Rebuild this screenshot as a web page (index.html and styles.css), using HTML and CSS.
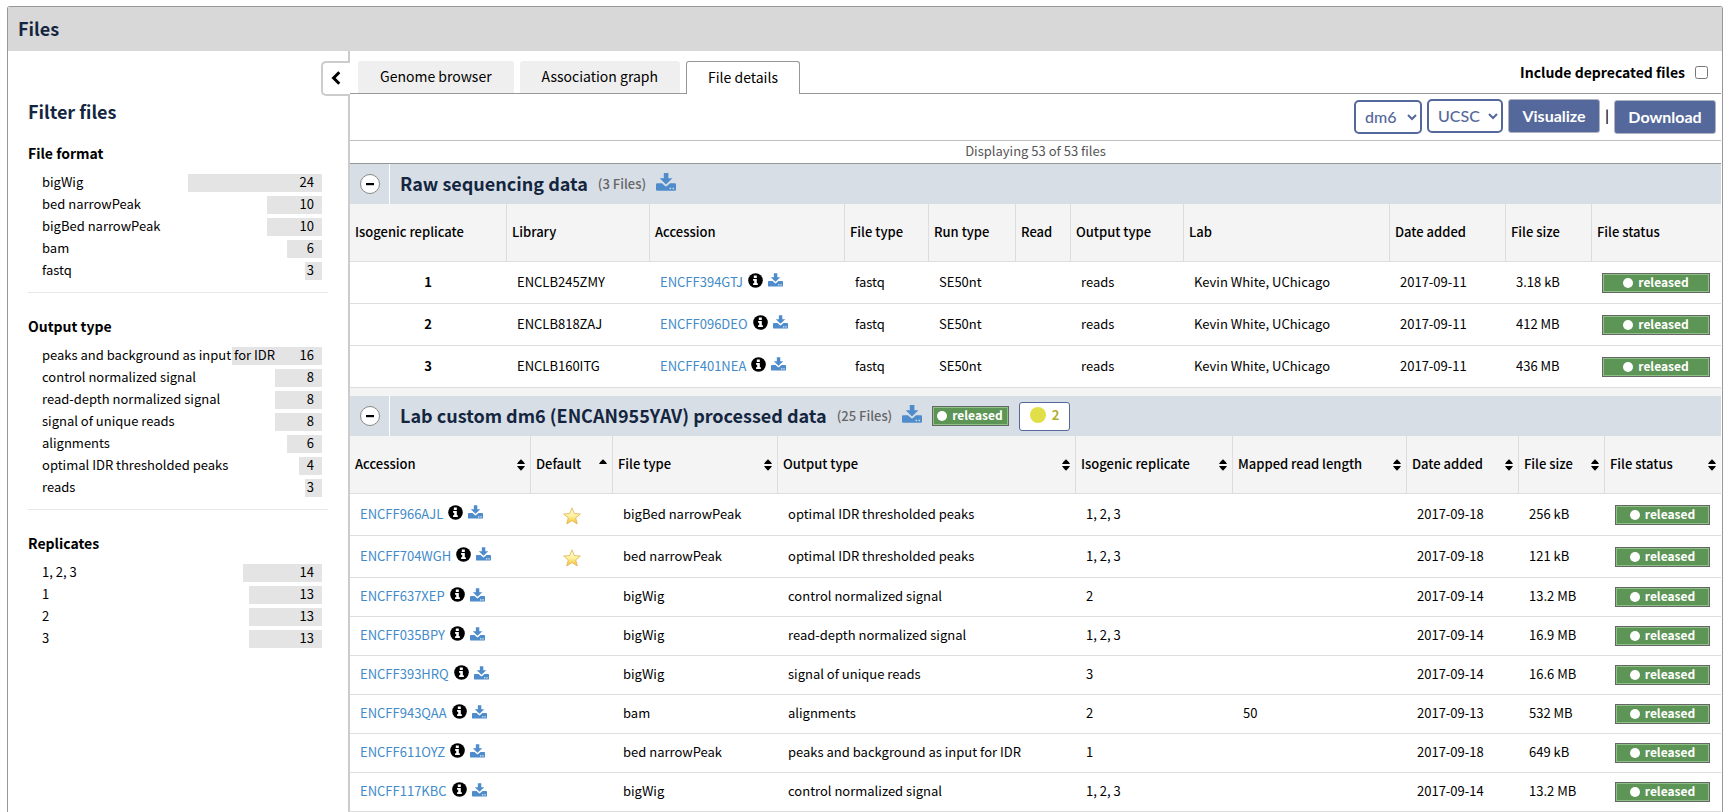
FILE: index.html
```html
<!DOCTYPE html>
<html lang="en">
<head>
<meta charset="utf-8">
<title>Files</title>
<link rel="stylesheet" href="styles.css">
</head>
<body>
<svg class="sprite" aria-hidden="true">
<defs>
<linearGradient id="gold" x1="0" y1="0" x2="0" y2="1"><stop offset="0" stop-color="#fffef2"/><stop offset="0.5" stop-color="#fdf3a0"/><stop offset="1" stop-color="#f3bf2a"/></linearGradient>
</defs>
<symbol id="i-info" viewBox="0 0 16 16"><circle cx="8" cy="8" r="7.8"/><path fill="#fff" d="M6.2 2.6h3.2v2.6H6.2zM5.4 6.3h4v4.6h1.1v1.9H5.4v-1.9h1.2V8.2H5.4z"/></symbol>
<symbol id="i-down" viewBox="0 0 20 18"><path d="M7.8 0h4.6v5.2h4L10 11.4 3.700 5.200h4.100z"/><path fill-rule="evenodd" d="M1.200 10.200h4.800l3 2.900q1 .9 2 0l3-2.900h4.800q1.200 0 1.200 1.200v5.200q0 1.200-1.200 1.200H1.200Q0 17.800 0 16.600v-5.200q0-1.200 1.200-1.200zM13.600 14.800v1.400h1.500v-1.400zm3 0v1.400h1.500v-1.400z"/></symbol>
<symbol id="i-star" viewBox="0 0 20 20"><path fill="url(#gold)" stroke="#e3b04b" stroke-width=".9" stroke-linejoin="round" d="M10 1l2.500 6.300 6.800.5-5.200 4.300 1.700 6.700L10 15.100l-5.800 3.700 1.700-6.700L.7 7.800l6.800-.5z"/></symbol>
<symbol id="i-sort" viewBox="0 0 8 12"><path d="M4 .3Q6.500 2.500 8 5H0Q1.500 2.500 4 .3zM4 11.700Q1.500 9.500 0 7h8Q6.500 9.500 4 11.700z"/></symbol>
<symbol id="i-up" viewBox="0 0 8 12"><path d="M4 .3Q6.500 2.500 8 5H0Q1.500 2.500 4 .3z"/></symbol>
<symbol id="i-minus" viewBox="0 0 20 20"><circle cx="10" cy="10" r="9.500" fill="#fff" stroke="#888"/><path d="M6 9h8v2.200H6z"/></symbol>
</svg>
<section class="panel">
<header class="panel-head"><h1>Files</h1></header>
<div class="panel-body">
<aside class="sidebar">
<div class="toggle-row"><button class="toggle" type="button" aria-label="Collapse filters"><svg viewBox="0 0 10 14"><path d="M8.300 1.300L2.600 7l5.700 5.700" fill="none" stroke="#000" stroke-width="3"/></svg></button></div>
<h2>Filter files</h2>
<section class="facet"><h3>File format</h3>
<ul>
<li><span>bigWig</span><b style="width:134px">24</b></li>
<li><span>bed narrowPeak</span><b style="width:55px">10</b></li>
<li><span>bigBed narrowPeak</span><b style="width:55px">10</b></li>
<li><span>bam</span><b style="width:35px">6</b></li>
<li><span>fastq</span><b style="width:17px">3</b></li>
</ul></section>
<section class="facet"><h3>Output type</h3>
<ul>
<li><span>peaks and background as input for IDR</span><b style="width:90px">16</b></li>
<li><span>control normalized signal</span><b style="width:47px">8</b></li>
<li><span>read-depth normalized signal</span><b style="width:47px">8</b></li>
<li><span>signal of unique reads</span><b style="width:47px">8</b></li>
<li><span>alignments</span><b style="width:35px">6</b></li>
<li><span>optimal IDR thresholded peaks</span><b style="width:23px">4</b></li>
<li><span>reads</span><b style="width:17px">3</b></li>
</ul></section>
<section class="facet"><h3>Replicates</h3>
<ul>
<li><span>1, 2, 3</span><b style="width:79px">14</b></li>
<li><span>1</span><b style="width:73px">13</b></li>
<li><span>2</span><b style="width:73px">13</b></li>
<li><span>3</span><b style="width:73px">13</b></li>
</ul></section>
</aside>
<main class="content">
<div class="tabs">
<button class="tab" type="button">Genome browser</button>
<button class="tab" type="button">Association graph</button>
<button class="tab active" type="button">File details</button>
<label class="deprecated">Include deprecated files <input type="checkbox"></label>
</div>
<div class="controls">
<span class="pick low"><select class="assembly" aria-label="Assembly"><option>dm6</option></select><svg viewBox="0 0 10 7"><path d="M1 1l4 4 4-4"/></svg></span>
<span class="pick"><select class="browser" aria-label="Browser"><option>UCSC</option></select><svg viewBox="0 0 10 7"><path d="M1 1l4 4 4-4"/></svg></span>
<button class="btn visualize" type="button">Visualize</button>
<span class="bar">|</span>
<button class="btn download low" type="button">Download</button>
</div>
<p class="summary">Displaying 53 of 53 files</p>

<div class="group">
<button class="fold" type="button" aria-label="Collapse"><svg><use href="#i-minus"/></svg></button>
<div class="group-title"><h2>Raw sequencing data</h2><span class="count">(3 Files)</span><a href="#" aria-label="Download all"><svg class="down-lg"><use href="#i-down"/></svg></a></div>
</div>
<table>
<colgroup><col style="width:157px"><col style="width:143px"><col style="width:195px"><col style="width:84px"><col style="width:87px"><col style="width:55px"><col style="width:113px"><col style="width:206px"><col style="width:116px"><col style="width:86px"><col style="width:129px"></colgroup>
<thead><tr><th>Isogenic replicate</th><th>Library</th><th>Accession</th><th>File type</th><th>Run type</th><th>Read</th><th>Output type</th><th>Lab</th><th>Date added</th><th>File size</th><th>File status</th></tr></thead>
<tbody>
<tr class="tall-row"><td class="rep">1</td><td>ENCLB245ZMY</td><td><div class="acc"><a href="#">ENCFF394GTJ</a><svg class="info"><use href="#i-info"/></svg><svg class="down"><use href="#i-down"/></svg></div></td><td>fastq</td><td>SE50nt</td><td></td><td>reads</td><td>Kevin White, UChicago</td><td>2017-09-11</td><td>3.18 kB</td><td><div class="status"><i></i>released</div></td></tr>
<tr class="tall-row"><td class="rep">2</td><td>ENCLB818ZAJ</td><td><div class="acc"><a href="#">ENCFF096DEO</a><svg class="info"><use href="#i-info"/></svg><svg class="down"><use href="#i-down"/></svg></div></td><td>fastq</td><td>SE50nt</td><td></td><td>reads</td><td>Kevin White, UChicago</td><td>2017-09-11</td><td>412 MB</td><td><div class="status"><i></i>released</div></td></tr>
<tr class="tall-row"><td class="rep">3</td><td>ENCLB160ITG</td><td><div class="acc"><a href="#">ENCFF401NEA</a><svg class="info"><use href="#i-info"/></svg><svg class="down"><use href="#i-down"/></svg></div></td><td>fastq</td><td>SE50nt</td><td></td><td>reads</td><td>Kevin White, UChicago</td><td>2017-09-11</td><td>436 MB</td><td><div class="status"><i></i>released</div></td></tr>
</tbody>
</table>
<div class="spacer"></div>
<div class="group">
<button class="fold" type="button" aria-label="Collapse"><svg><use href="#i-minus"/></svg></button>
<div class="group-title"><h2>Lab custom dm6 (ENCAN955YAV) processed data</h2><span class="count">(25 Files)</span><a href="#" aria-label="Download all"><svg class="down-lg"><use href="#i-down"/></svg></a><div class="status small"><i></i>released</div><button class="audit" type="button"><i></i>2</button></div>
</div>
<table>
<colgroup><col style="width:181px"><col style="width:82px"><col style="width:165px"><col style="width:298px"><col style="width:157px"><col style="width:174px"><col style="width:112px"><col style="width:86px"><col style="width:116px"></colgroup>
<thead><tr><th><div class="sort">Accession<svg><use href="#i-sort"/></svg></div></th><th><div class="sort">Default<svg><use href="#i-up"/></svg></div></th><th><div class="sort">File type<svg><use href="#i-sort"/></svg></div></th><th><div class="sort">Output type<svg><use href="#i-sort"/></svg></div></th><th><div class="sort">Isogenic replicate<svg><use href="#i-sort"/></svg></div></th><th><div class="sort">Mapped read length<svg><use href="#i-sort"/></svg></div></th><th><div class="sort">Date added<svg><use href="#i-sort"/></svg></div></th><th><div class="sort">File size<svg><use href="#i-sort"/></svg></div></th><th><div class="sort">File status<svg><use href="#i-sort"/></svg></div></th></tr></thead>
<tbody>
<tr class="tall-row"><td><div class="acc"><a href="#">ENCFF966AJL</a><svg class="info"><use href="#i-info"/></svg><svg class="down"><use href="#i-down"/></svg></div></td><td><svg class="star"><use href="#i-star"/></svg></td><td>bigBed narrowPeak</td><td>optimal IDR thresholded peaks</td><td>1, 2, 3</td><td></td><td>2017-09-18</td><td>256 kB</td><td><div class="status"><i></i>released</div></td></tr>
<tr class="tall-row"><td><div class="acc"><a href="#">ENCFF704WGH</a><svg class="info"><use href="#i-info"/></svg><svg class="down"><use href="#i-down"/></svg></div></td><td><svg class="star"><use href="#i-star"/></svg></td><td>bed narrowPeak</td><td>optimal IDR thresholded peaks</td><td>1, 2, 3</td><td></td><td>2017-09-18</td><td>121 kB</td><td><div class="status"><i></i>released</div></td></tr>
<tr><td><div class="acc"><a href="#">ENCFF637XEP</a><svg class="info"><use href="#i-info"/></svg><svg class="down"><use href="#i-down"/></svg></div></td><td></td><td>bigWig</td><td>control normalized signal</td><td>2</td><td></td><td>2017-09-14</td><td>13.2 MB</td><td><div class="status"><i></i>released</div></td></tr>
<tr><td><div class="acc"><a href="#">ENCFF035BPY</a><svg class="info"><use href="#i-info"/></svg><svg class="down"><use href="#i-down"/></svg></div></td><td></td><td>bigWig</td><td>read-depth normalized signal</td><td>1, 2, 3</td><td></td><td>2017-09-14</td><td>16.9 MB</td><td><div class="status"><i></i>released</div></td></tr>
<tr><td><div class="acc"><a href="#">ENCFF393HRQ</a><svg class="info"><use href="#i-info"/></svg><svg class="down"><use href="#i-down"/></svg></div></td><td></td><td>bigWig</td><td>signal of unique reads</td><td>3</td><td></td><td>2017-09-14</td><td>16.6 MB</td><td><div class="status"><i></i>released</div></td></tr>
<tr><td><div class="acc"><a href="#">ENCFF943QAA</a><svg class="info"><use href="#i-info"/></svg><svg class="down"><use href="#i-down"/></svg></div></td><td></td><td>bam</td><td>alignments</td><td>2</td><td>50</td><td>2017-09-13</td><td>532 MB</td><td><div class="status"><i></i>released</div></td></tr>
<tr><td><div class="acc"><a href="#">ENCFF611OYZ</a><svg class="info"><use href="#i-info"/></svg><svg class="down"><use href="#i-down"/></svg></div></td><td></td><td>bed narrowPeak</td><td>peaks and background as input for IDR</td><td>1</td><td></td><td>2017-09-18</td><td>649 kB</td><td><div class="status"><i></i>released</div></td></tr>
<tr><td><div class="acc"><a href="#">ENCFF117KBC</a><svg class="info"><use href="#i-info"/></svg><svg class="down"><use href="#i-down"/></svg></div></td><td></td><td>bigWig</td><td>control normalized signal</td><td>1, 2, 3</td><td></td><td>2017-09-14</td><td>13.2 MB</td><td><div class="status"><i></i>released</div></td></tr>
</tbody>
</table>
</main>
</div>
</section>
</body>
</html>
```
FILE: styles.css
```css
* { box-sizing: border-box; }
body {
  margin: 0;
  padding: 6px 8px 0 7px;
  background: #fff;
  color: #000;
  font: 13px/18px "Noto Sans CJK SC", "Noto Sans", sans-serif;
}
button, select, input { font: inherit; margin: 0; }
h1, h2, h3, p, ul { margin: 0; padding: 0; }
ul { list-style: none; }
a { color: #428bca; text-decoration: none; }
.sprite { position: absolute; width: 0; height: 0; }

.panel {
  border: 1px solid #979797;
  border-bottom: 0;
  border-radius: 3px 3px 0 0;
}
.panel-head { background: #d8d8d8; padding: 9px 10px 11px; }
h1, h2 { color: #14263f; font-size: 18px; line-height: 24px; font-weight: 700; }
.panel-body { display: flex; }

.sidebar {
  flex: none;
  width: 342px;
  border-right: 2px solid #ccc;
  padding: 10px 0 0 20px;
}
.toggle-row { display: flex; justify-content: flex-end; margin-right: -2px; }
.toggle {
  width: 29px;
  height: 35px;
  border: 2px solid #ccc;
  border-right: 0;
  border-radius: 5px 0 0 5px;
  background: #fff;
  padding: 0 0 2px 8px;
  display: flex;
  align-items: center;
}
.toggle svg { width: 10px; height: 14px; }
.sidebar h2 { margin-top: 3px; }
.facet { width: 300px; border-bottom: 1px solid #e8e8e8; padding: 18px 6px 8px 0; }
.facet + .facet { padding-top: 21px; }
.facet:last-child { border-bottom: 0; }
.facet h3 { font-size: 14px; line-height: 24px; font-weight: 700; margin-bottom: 9px; }
.facet li {
  display: grid;
  grid-template-columns: 1fr;
  height: 18px;
  margin-bottom: 4px;
  padding-left: 14px;
  line-height: 16px;
}
.facet li > * { grid-area: 1 / 1; }
.facet span { z-index: 1; }
.facet b {
  justify-self: end;
  background: #e4e4e4;
  font-weight: 400;
  text-align: right;
  padding-right: 8px;
}

.content { flex: 1; min-width: 0; margin-right: 1px; }
.tabs {
  display: flex;
  align-items: flex-end;
  gap: 6px;
  height: 43px;
  padding-left: 8px;
  border-bottom: 1px solid #979797;
}
.tab {
  height: 32px;
  padding: 0 22px 2px;
  border: 0;
  border-radius: 3px 3px 0 0;
  background: #efefef;
  color: #000;
  font-size: 14px;
}
.tab.active {
  height: 33px;
  margin-bottom: -1px;
  padding: 0 21px 3px;
  border: 1px solid #979797;
  border-bottom: 0;
  background: #fff;
}
.deprecated {
  margin-left: auto;
  padding-right: 13px;
  align-self: center;
  display: flex;
  align-items: center;
  gap: 10px;
  font-size: 14px;
  font-weight: 700;
}
.deprecated input { width: 13px; height: 13px; }

.controls {
  display: flex;
  justify-content: flex-end;
  align-items: flex-start;
  gap: 5px;
  height: 47px;
  padding: 5px 5px 0 0;
  border-bottom: 1px solid #bfbfbf;
  font: 500 16px/20px Lato, sans-serif;
}
.low { margin-top: 1px; }
.pick { position: relative; display: block; }
.pick select {
  appearance: none;
  display: block;
  height: 34px;
  border: 2px solid #54689b;
  border-radius: 5px;
  background: #fff;
  color: #54689b;
  padding: 0 0 0 9px;
}
.assembly { width: 68px; }
.browser { width: 76px; }
.pick svg {
  position: absolute;
  right: 5px;
  top: 14px;
  width: 10px;
  height: 7px;
  fill: none;
  stroke: #54689b;
  stroke-width: 2;
}
.btn {
  height: 34px;
  border: 1px solid #b0b4c0;
  border-radius: 3px;
  background: #54689b;
  color: #fff;
  font-weight: 700;
  padding: 0;
}
.visualize { width: 92px; }
.download { width: 102px; }
.bar { width: 4px; color: #000; padding-top: 6px; }

.summary {
  height: 23px;
  line-height: 20px;
  border-bottom: 1px solid #979797;
  text-align: center;
  color: #555;
}

.group { display: flex; height: 40px; background: #d8dee6; }
.fold {
  width: 40px;
  padding: 0 0 0 10px;
  border: 0;
  border-right: 1px solid #fff;
  background: none;
}
.fold svg { display: block; width: 20px; height: 20px; }
.group-title { display: flex; align-items: center; padding-left: 10px; gap: 10px; }
.group-title h2 { padding-bottom: 2px; }
.count { color: #666; font-weight: 500; }
.down-lg { display: block; width: 20px; height: 18px; margin-bottom: 4px; fill: #4f8ccb; }
.spacer { height: 8px; background: #f4f4f4; }

table { width: 100%; table-layout: fixed; border-collapse: separate; border-spacing: 0; }
th {
  height: 58px;
  padding: 0 5px 2px;
  background: #f4f4f4;
  border-right: 1px solid #ddd;
  border-bottom: 1px solid #ddd;
  text-align: left;
  font-weight: 500;
  white-space: nowrap;
}
th:last-child { border-right: 0; }
td {
  height: 39px;
  padding: 0 11px 2px 10px;
  border-bottom: 1px solid #ddd;
  white-space: nowrap;
}
td:last-child { padding-bottom: 0; }
.tall-row td { height: 42px; }
.rep { text-align: center; font-weight: 700; }
.sort { display: flex; justify-content: space-between; align-items: center; }
.sort svg { width: 8px; height: 12px; margin-top: 2px; }
.acc { display: flex; align-items: center; gap: 5px; }
.acc svg { margin-bottom: 3px; }
.info { width: 15px; height: 15px; }
.down { width: 15px; height: 14px; fill: #4f8ccb; }
.star { display: block; width: 18px; height: 18px; margin: 4px auto 0; }
.status {
  display: flex;
  align-items: center;
  justify-content: center;
  gap: 5px;
  height: 20px;
  padding-bottom: 2px;
  border: 1px solid #666;
  box-shadow: inset 0 0 0 1px #8cc084;
  background: #5d9556;
  color: #fff;
  font-size: 12px;
  font-weight: 700;
  line-height: 16px;
}
.status i { width: 10px; height: 10px; margin-top: 2px; border-radius: 50%; background: #fff; }
.small { padding: 0 5px 2px 4px; }
.audit {
  display: flex;
  align-items: center;
  gap: 6px;
  height: 29px;
  padding: 0 10px 2px;
  border: 1px solid #54689b;
  border-radius: 3px;
  background: #fff;
  color: #b0ad2f;
  font-weight: 700;
}
.audit i { width: 16px; height: 16px; border-radius: 50%; background: #e0df47; }
```
